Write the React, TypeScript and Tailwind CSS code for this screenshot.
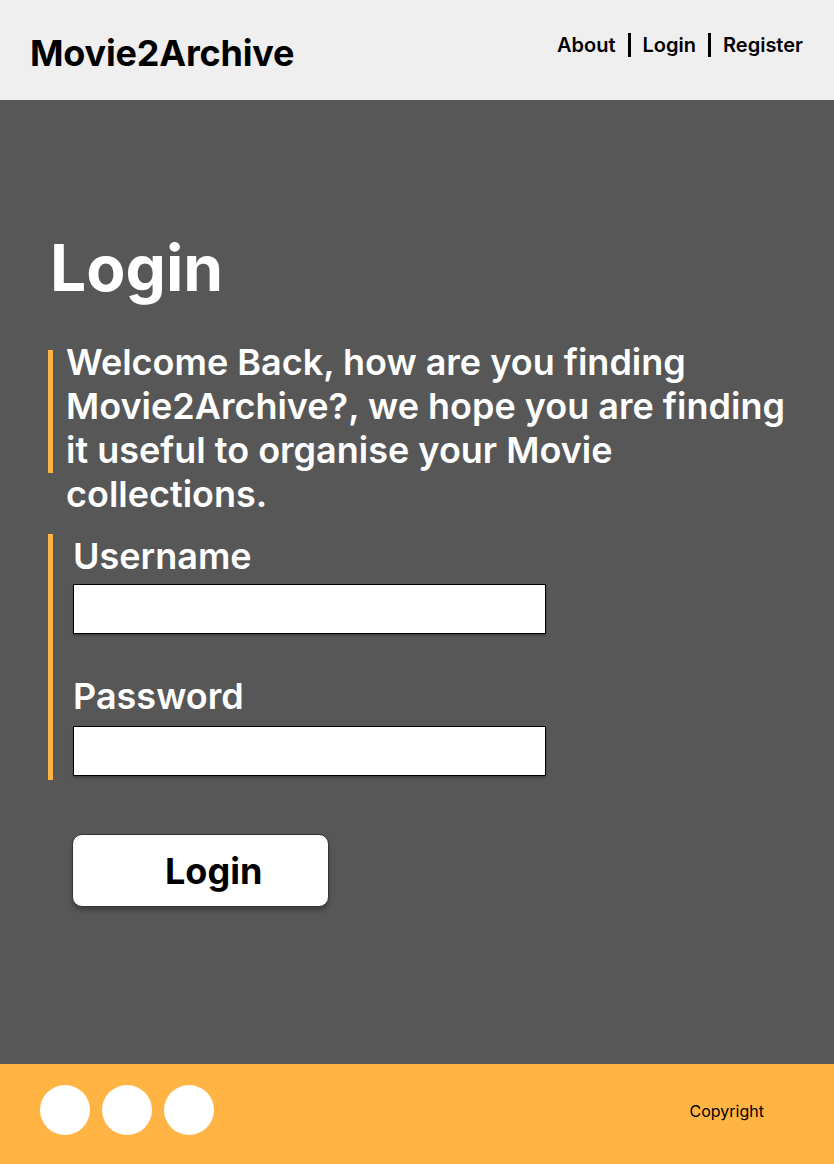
import React from "react";

export default function App() {
  return (
    <div className="w-[834px] min-h-[1164px] flex flex-col font-['Inter',sans-serif]">
      {/* Header */}
      <header className="h-[100px] bg-[#efefef] flex justify-between items-start pl-[30px] pr-[31px] shrink-0">
        <div className="mt-[35px] text-[36px] leading-none font-bold text-black tracking-[-0.2px]">Movie2Archive</div>
        <nav className="mt-[31px] flex items-center gap-[12px] text-[20px] leading-[28px] font-semibold text-black">
          <a href="#">About</a>
          <div className="w-[3px] h-[24px] bg-black" />
          <a href="#">Login</a>
          <div className="w-[3px] h-[24px] bg-black" />
          <a href="#">Register</a>
        </nav>
      </header>

      {/* Main */}
      <main className="h-[964px] bg-[#575757] pl-12 pr-[30px] pt-[136px] shrink-0">
        <h1 className="ml-[2px] text-[64px] leading-none font-bold text-white">Login</h1>

        <div className="mt-[40px] flex gap-[13px] items-start">
          <div className="w-[5px] h-[123px] mt-[10px] bg-[#ffb443] shrink-0" />
          <p className="flex-1 text-[36px] leading-[44px] font-semibold text-white">
            Welcome Back, how are you finding Movie2Archive?, we hope you are finding it useful to organise your Movie collections.
          </p>
        </div>

        <form className="mt-[18px] border-l-[5px] border-[#ffb443] pl-[20px] pt-[2px] pb-[4px]" onSubmit={(e) => e.preventDefault()}>
          <label className="block text-[36px] leading-[40px] font-semibold text-white">Username</label>
          <input
            type="text"
            className="mt-[8px] block w-[473px] h-[50px] bg-white border border-black shadow-[0_2px_2px_rgba(0,0,0,0.25)] outline-none"
          />
          <label className="block mt-[42px] text-[36px] leading-[40px] font-semibold text-white">Password</label>
          <input
            type="password"
            className="mt-[10px] block w-[473px] h-[50px] bg-white border border-black shadow-[0_2px_2px_rgba(0,0,0,0.25)] outline-none"
          />
        </form>

        <button className="mt-[54px] ml-[24px] w-[257px] h-[73px] bg-white border border-[#333] rounded-[10px] shadow-[0_4px_4px_rgba(0,0,0,0.25)] flex items-center pl-[92px] text-[36px] font-bold text-black">
          Login
        </button>
      </main>

      {/* Footer */}
      <footer className="h-[100px] bg-[#ffb443] flex items-center justify-between pl-10 pr-[70px] pb-[8px] shrink-0">
        <div className="flex gap-3">
          <div className="w-[50px] h-[50px] rounded-full bg-white" />
          <div className="w-[50px] h-[50px] rounded-full bg-white" />
          <div className="w-[50px] h-[50px] rounded-full bg-white" />
        </div>
        <div className="text-[16px] text-black mt-[2px]">Copyright</div>
      </footer>
    </div>
  );
}
